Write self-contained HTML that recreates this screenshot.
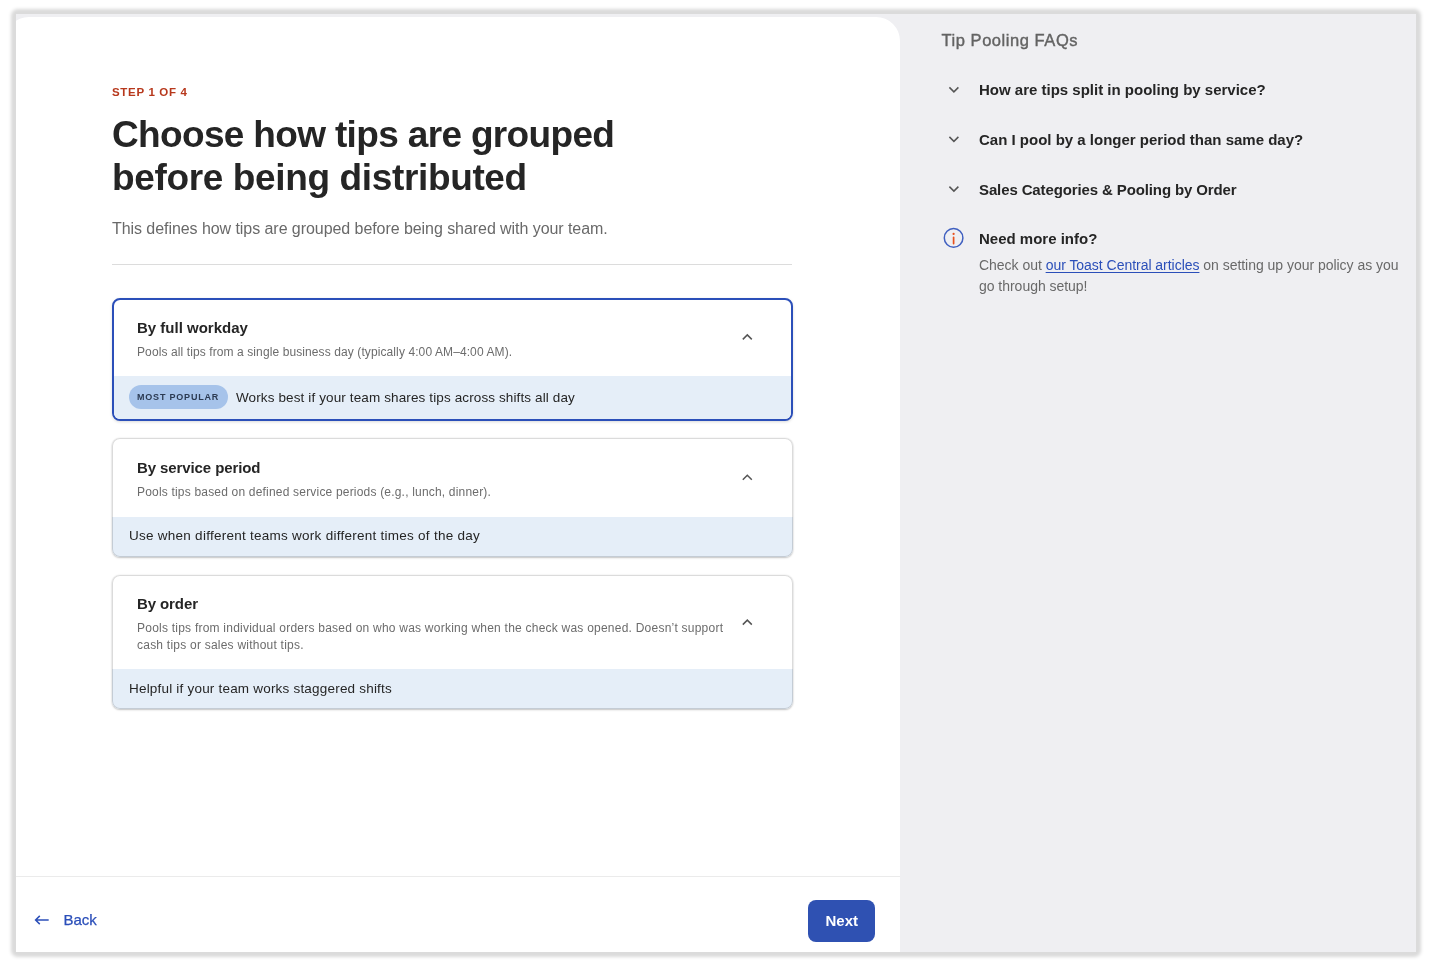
<!DOCTYPE html>
<html lang="en">
<head>
<meta charset="utf-8">
<title>Tip Pooling Setup</title>
<style>
*{box-sizing:border-box;margin:0;padding:0}
html,body{width:1432px;height:970px;overflow:hidden;background:#fff}
body{font-family:"Liberation Sans",sans-serif;color:#252525;position:relative}
.abs{position:absolute;white-space:nowrap}
#frame{position:absolute;left:16px;top:14px;width:1400px;height:938px;background:#efeff2}
#fsh{position:absolute;left:14px;top:12px;width:1404px;height:942px;border-radius:4px;background:#dbdbdb;box-shadow:0 0 3.5px 2.5px #dadada}
#clip{position:absolute;left:0;top:0;width:1400px;height:938px;overflow:hidden}
#mainbg{position:absolute;left:-11px;top:3px;width:895px;height:940px;background:#fff;border-radius:24px 24px 0 0}
/* all coordinates below are page-absolute; #page is offset to cancel frame origin */
#page{position:absolute;left:-16px;top:-14px;width:1432px;height:970px;will-change:transform}
.step{left:112px;top:84px;font-size:11.5px;font-weight:bold;letter-spacing:.68px;color:#b7381c;line-height:16px}
.h1{left:112px;font-size:37px;line-height:43px;font-weight:bold;color:#252525}
.sub{left:112px;top:218px;font-size:16px;line-height:22px;color:#696969;letter-spacing:-0.06px}
.hr{position:absolute;left:112px;top:264px;width:680px;height:1px;background:#dcdcdc}
.card{position:absolute;left:112px;width:681px;background:#fff;border-radius:8px;overflow:hidden}
.card.sel{border:2px solid #2b4fb9;box-shadow:0 1px 3px rgba(0,0,0,.15)}
.card.un{}
.ring{position:absolute;left:112px;width:681px;border-radius:8px;box-shadow:inset 0 0 0 1px rgba(0,0,0,.14)}
.shadow{position:absolute;left:112px;width:681px;border-radius:8px;box-shadow:0 1px 2px rgba(0,0,0,.22),0 0 2px rgba(0,0,0,.10)}
.f{position:absolute;left:112px;width:681px;background:#e5eef8}
.t{font-size:15px;font-weight:bold;color:#252525;line-height:20px;left:137px}
.d{font-size:12px;color:#6c6c6c;line-height:16px;left:137px;letter-spacing:.1px}
.ft{font-size:13.5px;color:#252525;line-height:18px;letter-spacing:.1px}
.pill{position:absolute;left:128.5px;top:384.5px;width:99px;height:24.5px;border-radius:12.5px;background:#a6c3ea}
.pt{left:137px;top:390px;font-size:9px;font-weight:bold;letter-spacing:.8px;color:#2b3a52;line-height:14px}
.foothr{position:absolute;left:16px;top:876px;width:884px;height:1px;background:#ebebeb}
.back{left:63.5px;top:910px;font-size:15px;color:#2b4fb9;line-height:20px;-webkit-text-stroke:.25px #2b4fb9}
.next{position:absolute;left:808px;top:900px;width:67px;height:41.5px;border-radius:8px;background:#2f51b2}
.nt{left:825.5px;top:911px;font-size:15px;font-weight:bold;color:#fff;line-height:20px}
.faqh{left:941.5px;top:29px;font-size:16.5px;color:#636363;line-height:22px;letter-spacing:.55px;-webkit-text-stroke:.4px #636363}
.q{left:979px;font-size:15px;font-weight:bold;color:#252525;line-height:20px}
.p{left:979px;font-size:14px;color:#696969;line-height:20.5px;letter-spacing:-.03px}
.p a{color:#2b4fb9;text-decoration:underline;text-decoration-thickness:1px;text-underline-offset:2px}
svg{position:absolute;overflow:visible}
</style>
</head>
<body>
<div id="fsh"></div>
<div id="frame"><div id="clip"><div id="mainbg"></div></div>
<div id="page">

  <div class="abs step">STEP 1 OF 4</div>
  <div class="abs h1" style="top:113px;letter-spacing:-0.66px">Choose how tips are grouped</div>
  <div class="abs h1" style="top:156px;letter-spacing:-0.36px">before being distributed</div>
  <div class="abs sub">This defines how tips are grouped before being shared with your team.</div>
  <div class="hr"></div>

  <!-- card 1 (selected) -->
  <div class="card sel" style="top:298px;height:123px"></div>
  <div class="f" style="left:114px;width:677px;top:376px;height:43px;border-radius:0 0 6px 6px"></div>
  <div class="abs t" style="top:318px">By full workday</div>
  <div class="abs d" style="top:344px">Pools all tips from a single business day (typically 4:00 AM–4:00 AM).</div>
  <svg style="left:0;top:0" width="1" height="1"><path d="M742.8 339.4 L747.3 334.9 L751.8 339.4" fill="none" stroke="#555" stroke-width="1.5"/></svg>
  <div class="pill"></div>
  <div class="abs pt">MOST POPULAR</div>
  <div class="abs ft" style="left:236px;top:389px;letter-spacing:.12px">Works best if your team shares tips across shifts all day</div>

  <!-- card 2 -->
  <div class="shadow" style="top:438px;height:119px"></div>
  <div class="card un" style="top:438px;height:119px"></div>
  <div class="f" style="top:516.5px;height:40.5px;border-radius:0 0 8px 8px"></div>
  <div class="ring" style="top:438px;height:119px"></div>
  <div class="abs t" style="top:458px;letter-spacing:-.1px">By service period</div>
  <div class="abs d" style="top:484px;letter-spacing:.19px">Pools tips based on defined service periods (e.g., lunch, dinner).</div>
  <svg style="left:0;top:0" width="1" height="1"><path d="M742.8 479.7 L747.3 475.2 L751.8 479.7" fill="none" stroke="#555" stroke-width="1.5"/></svg>
  <div class="abs ft" style="left:129px;top:527px;letter-spacing:.26px">Use when different teams work different times of the day</div>

  <!-- card 3 -->
  <div class="shadow" style="top:575px;height:134px"></div>
  <div class="card un" style="top:575px;height:134px"></div>
  <div class="f" style="top:669px;height:40px;border-radius:0 0 8px 8px"></div>
  <div class="ring" style="top:575px;height:134px"></div>
  <div class="abs t" style="top:594px;letter-spacing:-.1px">By order</div>
  <div class="abs d" style="top:620px;line-height:17px;letter-spacing:.23px">Pools tips from individual orders based on who was working when the check was opened. Doesn’t support<br>cash tips or sales without tips.</div>
  <svg style="left:0;top:0" width="1" height="1"><path d="M742.8 624.6 L747.3 620.1 L751.8 624.6" fill="none" stroke="#555" stroke-width="1.5"/></svg>
  <div class="abs ft" style="left:129px;top:680px;letter-spacing:.2px">Helpful if your team works staggered shifts</div>

  <!-- footer -->
  <div class="foothr"></div>
  <svg style="left:0;top:0" width="1" height="1"><path d="M48.7 920 H35.6 M39.8 915.9 L35.6 920 L39.8 924.1" fill="none" stroke="#2b4fb9" stroke-width="1.5"/></svg>
  <div class="abs back">Back</div>
  <div class="next"></div>
  <div class="abs nt">Next</div>

  <!-- side -->
  <div class="abs faqh">Tip Pooling FAQs</div>
  <svg style="left:0;top:0" width="1" height="1">
    <g fill="none" stroke="#555" stroke-width="1.5">
      <path d="M949.4 87.4 L953.9 91.9 L958.4 87.4"/>
      <path d="M949.4 136.9 L953.9 141.4 L958.4 136.9"/>
      <path d="M949.4 186.6 L953.9 191.1 L958.4 186.6"/>
    </g>
    <circle cx="953.6" cy="237.9" r="9.3" fill="none" stroke="#4060c0" stroke-width="1.5"/>
    <circle cx="953.6" cy="233.9" r="1.1" fill="#e8501c"/>
    <path d="M953.6 237.4 V243.6" stroke="#e8501c" stroke-width="1.7" stroke-linecap="round" fill="none"/>
  </svg>
  <div class="abs q" style="top:80px">How are tips split in pooling by service?</div>
  <div class="abs q" style="top:130px">Can I pool by a longer period than same day?</div>
  <div class="abs q" style="top:180px;letter-spacing:-.12px">Sales Categories &amp; Pooling by Order</div>
  <div class="abs q" style="top:229px">Need more info?</div>
  <div class="abs p" style="top:255px">Check out <a>our Toast Central articles</a> on setting up your policy as you<br>go through setup!</div>

</div>
</div>
</body>
</html>
